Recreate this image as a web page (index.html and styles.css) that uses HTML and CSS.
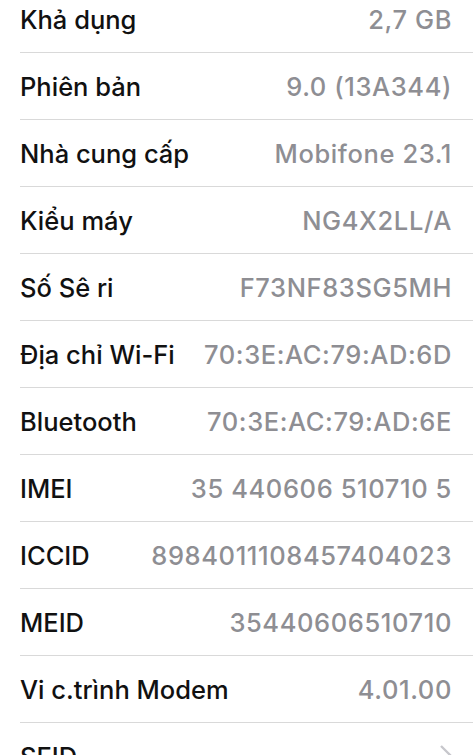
FILE: index.html
```html
<!DOCTYPE html>
<html lang="vi">
<head>
  <meta charset="UTF-8" />
  <meta name="viewport" content="width=device-width, initial-scale=1.0">
  <title>Giới thiệu</title>
  <link rel="stylesheet" href="styles.css">
</head>
<body>
  <ul class="list">
    <li class="row"><span class="label">Khả dụng</span><span class="value">2,7 GB</span></li>
    <li class="row"><span class="label">Phiên bản</span><span class="value">9.0 (13A344)</span></li>
    <li class="row"><span class="label">Nhà cung cấp</span><span class="value">Mobifone 23.1</span></li>
    <li class="row"><span class="label">Kiểu máy</span><span class="value">NG4X2LL/A</span></li>
    <li class="row"><span class="label">Số Sê ri</span><span class="value">F73NF83SG5MH</span></li>
    <li class="row"><span class="label">Địa chỉ Wi-Fi</span><span class="value">70:3E:AC:79:AD:6D</span></li>
    <li class="row"><span class="label">Bluetooth</span><span class="value">70:3E:AC:79:AD:6E</span></li>
    <li class="row"><span class="label">IMEI</span><span class="value">35 440606 510710 5</span></li>
    <li class="row"><span class="label">ICCID</span><span class="value">8984011108457404023</span></li>
    <li class="row"><span class="label">MEID</span><span class="value">35440606510710</span></li>
    <li class="row"><span class="label">Vi c.trình Modem</span><span class="value">4.01.00</span></li>
    <li class="row">
      <span class="label">SEID</span>
      <svg class="chevron" width="14" height="24" viewBox="0 0 14 24"><path d="M2 2 L12 12 L2 22" fill="none" stroke="#c7c7cc" stroke-width="2.4"/></svg>
    </li>
  </ul>
</body>
</html>
```

FILE: styles.css
```css
body {
  margin: 0;
  background: #fff;
  font-family: Inter, "Noto Sans", sans-serif;
  overflow: hidden;
}
.list {
  list-style: none;
  margin: -14px 0 0;
  padding: 0 0 0 20px;
}
.row {
  display: flex;
  align-items: center;
  justify-content: space-between;
  height: 66px;
  padding-right: 21px;
  border-bottom: 1px solid #d9d9d9;
  font-size: 25.5px;
  font-weight: 500;
}
.label {
  color: #111;
}
.value {
  color: #8e8e93;
  letter-spacing: 0.6px;
}
.chevron {
  margin-right: -1px;
}
```
